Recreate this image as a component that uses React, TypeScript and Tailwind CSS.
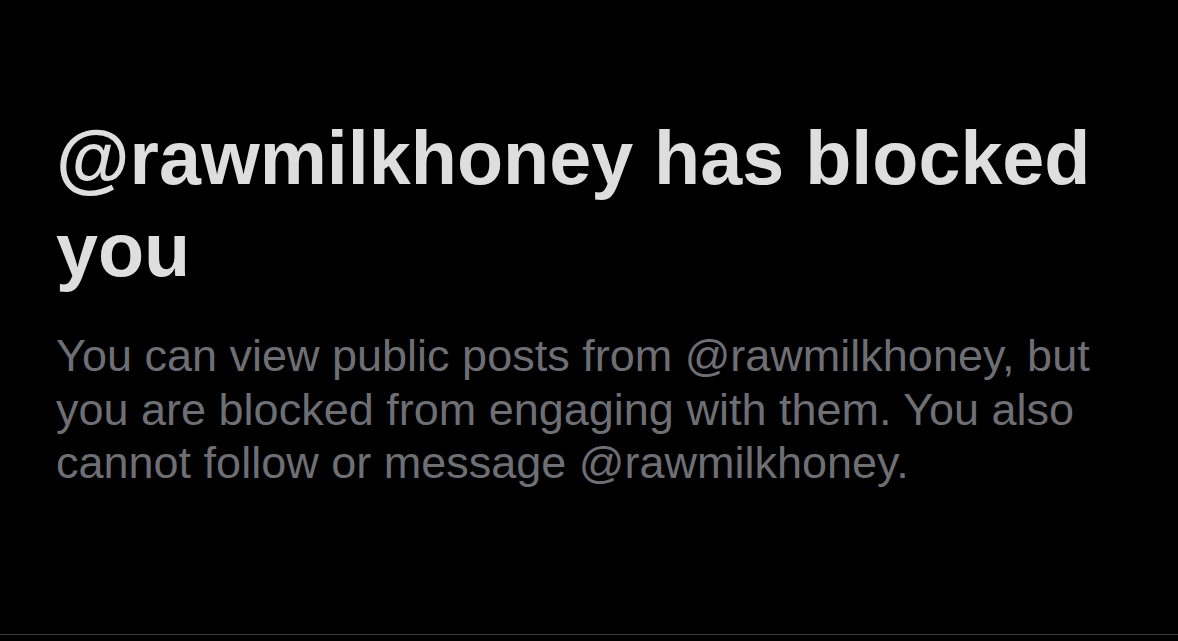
export default function App() {
    return (
        <div className="w-[1178px] h-[641px] bg-black flex flex-col font-['Liberation_Sans',Arial,sans-serif]">
            <div className="flex-1 pl-[56px] pt-[112px] pr-[60px]">
                <h1 className="text-[#dedede] text-[75.5px] font-bold leading-[92px]">
                    @rawmilkhoney has blocked you
                </h1>
                <p className="text-[#6e6f74] text-[45px] leading-[53.5px] mt-[33px]">
                    You can view public posts from @rawmilkhoney, but you are blocked from engaging with them. You also cannot follow or message @rawmilkhoney.
                </p>
            </div>
            <div className="h-px bg-[#3a3a3a] mb-[6px]" />
        </div>
    )
}
